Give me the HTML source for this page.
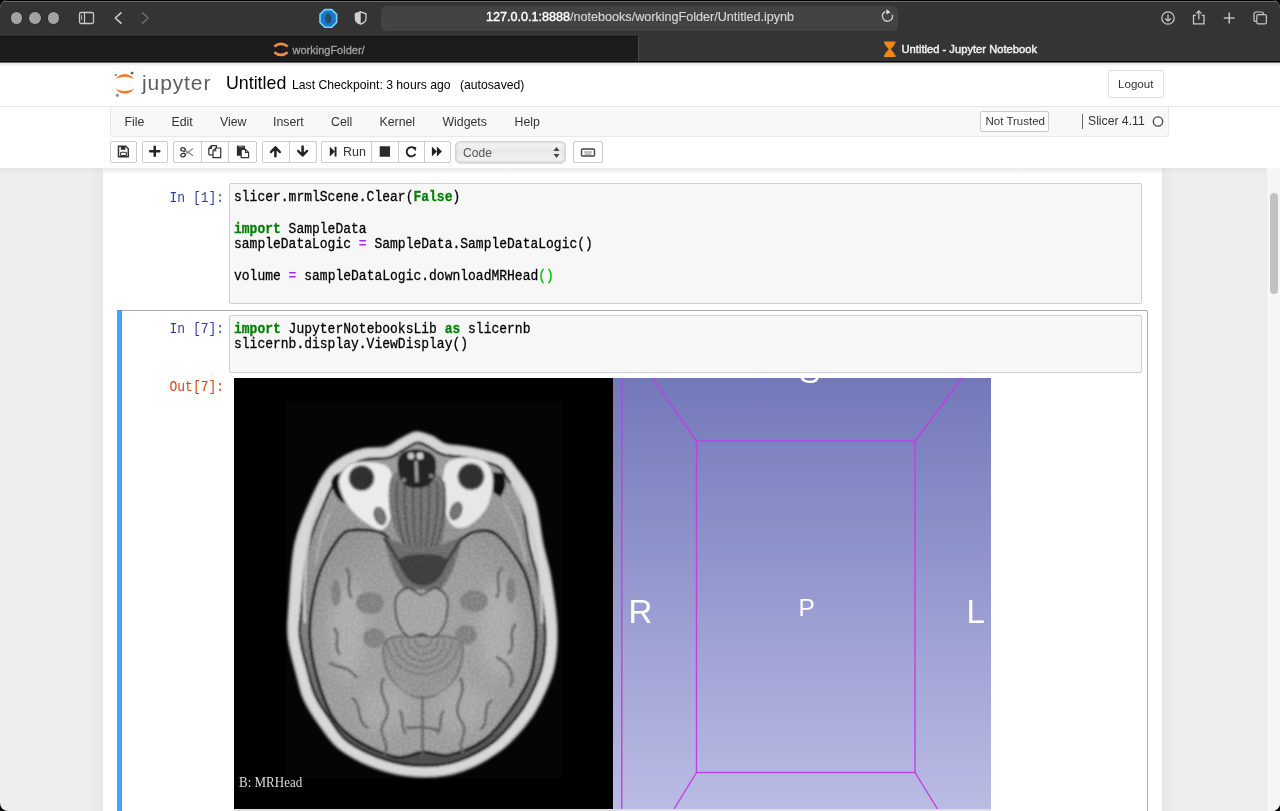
<!DOCTYPE html>
<html><head><meta charset="utf-8">
<style>
*{margin:0;padding:0;box-sizing:border-box}
html,body{width:1280px;height:811px;overflow:hidden;background:#000;font-family:"Liberation Sans",sans-serif}
.a{position:absolute}
#win{position:absolute;left:0;top:0;width:1280px;height:811px;border-radius:8px;overflow:hidden;background:#eee}
#title{left:0;top:0;width:1280px;height:36px;background:#343434;border-top:1px solid #000}
#title:before{content:"";position:absolute;left:0;top:0;right:0;height:1px;background:#6b6b6b;border-radius:8px 8px 0 0}
.tl{width:11.6px;height:11.6px;border-radius:50%;background:#a2a2a2;top:12.4px;box-shadow:0 0 0 0.7px #262626}
#url{left:381px;top:6px;width:517px;height:25px;background:#434343;border-radius:6px}
#urltext{left:486px;top:10.2px;font-size:12.6px;color:#d8d8d8;white-space:pre;-webkit-text-stroke:0.15px #d8d8d8}
#urltext b{color:#fff;font-weight:normal;-webkit-text-stroke:0.4px #fff}
#tabs{left:0;top:36px;width:1280px;height:26px;background:#353535}
#tab1{left:0;top:36px;width:638px;height:25px;background:#1c1c1c;border-top:1px solid #0d0d0d;border-bottom:1px solid #252525}
#tab2{left:638px;top:36px;width:1px;height:26px;background:#4a4a4a}
#tabline{left:0;top:61px;width:1280px;height:2px;background:linear-gradient(#080808 50%,#6a6a6a 50%)}
#page{left:0;top:63px;width:1280px;height:105px;background:#fff}
.btn{position:absolute;background:#fff;border:1px solid #ccc;border-radius:2px;height:22px;top:141px}
.mi{position:absolute;top:115px;font-size:12.3px;color:#333}
.mono{font-family:"Liberation Mono",monospace;font-size:13px;white-space:pre;line-height:14.355px;transform:scaleY(1.1);transform-origin:0 0;-webkit-text-stroke:0.25px currentColor}
.kw{color:#008000;font-weight:bold}
.op{color:#aa22ff}
.inp{position:absolute;left:229px;width:913px;background:#f7f7f7;border:1px solid #cfcfcf;border-radius:2px}
.pr{position:absolute;color:#303f9f;font-family:"Liberation Mono",monospace;font-size:13px;white-space:pre;line-height:14.355px;transform:scaleY(1.1);transform-origin:0 0}
</style></head><body>
<div id="win">
  <!-- title bar -->
  <div id="title" class="a"></div>
  <div class="a tl" style="left:10.5px"></div>
  <div class="a tl" style="left:29px"></div>
  <div class="a tl" style="left:47.5px"></div>
  <div id="url" class="a"></div>
  <div id="urltext" class="a"><b>127.0.0.1:8888</b>/notebooks/workingFolder/Untitled.ipynb</div>
  <svg class="a" style="left:0;top:0" width="1280" height="36">
    <!-- sidebar icon -->
    <rect x="79.5" y="12.5" width="14" height="11" rx="1.5" fill="none" stroke="#c8c8c8" stroke-width="1.3"/>
    <line x1="84.5" y1="12.5" x2="84.5" y2="23.5" stroke="#c8c8c8" stroke-width="1.2"/>
    <line x1="81.5" y1="15" x2="81.5" y2="20" stroke="#c8c8c8" stroke-width="0.8"/>
    <!-- back / forward -->
    <polyline points="121,12.8 115.3,18 121,23.2" fill="none" stroke="#cfcfcf" stroke-width="1.6" stroke-linecap="round" stroke-linejoin="round"/>
    <polyline points="142.5,12.8 148.2,18 142.5,23.2" fill="none" stroke="#6a6a6a" stroke-width="1.6" stroke-linecap="round" stroke-linejoin="round"/>
    <!-- privacy octagon -->
    <polygon points="324.8,9.6 331.8,9.6 336.6,14.4 336.6,22.4 331.8,27.3 324.8,27.3 320,22.4 320,14.4" fill="#1a78c8" stroke="#74d2ff" stroke-width="1.6" stroke-linejoin="round"/>
    <ellipse cx="328.3" cy="18.5" rx="3" ry="5" fill="#2d4a6a"/>
    <!-- half shield -->
    <path d="M360.7,11.8 L366,13.8 L366,18.5 C366,21.5 363.5,23.3 360.7,24 C357.9,23.3 355.4,21.5 355.4,18.5 L355.4,13.8 Z" fill="none" stroke="#d0d0d0" stroke-width="1.3"/>
    <path d="M360.7,11.8 L355.4,13.8 L355.4,18.5 C355.4,21.5 357.9,23.3 360.7,24 Z" fill="#d0d0d0"/>
    <!-- reload -->
    <path d="M890.5,13.6 A5,5 0 1 1 882.3,14.6" fill="none" stroke="#c8c8c8" stroke-width="1.4" stroke-linecap="round" transform="translate(0,-1) rotate(30 886.8 18.4)"/>
    <polygon points="886.5,9.3 890.5,12.2 886.3,14.2" fill="#e6e6e6"/>
    <!-- download -->
    <circle cx="1168" cy="18" r="6.2" fill="none" stroke="#c8c8c8" stroke-width="1.3"/>
    <line x1="1168" y1="14.5" x2="1168" y2="21" stroke="#c8c8c8" stroke-width="1.3"/>
    <polyline points="1165.2,18.5 1168,21.2 1170.8,18.5" fill="none" stroke="#c8c8c8" stroke-width="1.3"/>
    <!-- share -->
    <path d="M1195.8,15.3 L1193.5,15.3 L1193.5,23.8 L1204,23.8 L1204,15.3 L1201.7,15.3" fill="none" stroke="#c8c8c8" stroke-width="1.3"/>
    <line x1="1198.8" y1="11.2" x2="1198.8" y2="19.5" stroke="#c8c8c8" stroke-width="1.3"/>
    <polyline points="1196.3,13.6 1198.8,11 1201.3,13.6" fill="none" stroke="#c8c8c8" stroke-width="1.3"/>
    <!-- plus -->
    <line x1="1223.8" y1="18" x2="1234.6" y2="18" stroke="#c8c8c8" stroke-width="1.4"/>
    <line x1="1229.2" y1="12.6" x2="1229.2" y2="23.4" stroke="#c8c8c8" stroke-width="1.4"/>
    <!-- tabs -->
    <rect x="1254" y="12" width="9.5" height="9.5" rx="2" fill="none" stroke="#c8c8c8" stroke-width="1.2"/>
    <rect x="1256.8" y="14.6" width="9.6" height="9.3" rx="1.5" fill="#363636" stroke="#c8c8c8" stroke-width="1.2"/>
  </svg>

  <!-- tab bar -->
  <div id="tabs" class="a"></div>
  <div id="tab1" class="a"></div>
  <div id="tab2" class="a"></div>
  <div id="tabline" class="a"></div>
  <svg class="a" style="left:270px;top:40px" width="22" height="20">
    <path d="M4.3,6.6 Q11,1.3 17.7,6.6" fill="none" stroke="#ee8a4c" stroke-width="2.6"/>
    <path d="M4.3,12.2 Q11,17.7 17.7,12.2" fill="none" stroke="#ee8a4c" stroke-width="2.6"/>
  </svg>
  <div class="a" style="left:292.5px;top:43.5px;font-size:11px;color:#a3a3a3;white-space:pre;-webkit-text-stroke:0.3px #a3a3a3">workingFolder/</div>
  <svg class="a" style="left:882px;top:41px" width="16" height="17">
    <path d="M2,1.5 H13.5 M2,15 H13.5" stroke="#f0891a" stroke-width="1.8"/>
    <path d="M3,2 L12.5,2 L12.5,4 L8.7,8.2 L12.5,12.5 L12.5,14.5 L3,14.5 L3,12.5 L6.8,8.2 L3,4 Z" fill="#f0891a"/>
  </svg>
  <div class="a" style="left:901.5px;top:43.3px;font-size:11.2px;color:#f0f0f0;white-space:pre;-webkit-text-stroke:0.45px #f0f0f0">Untitled - Jupyter Notebook</div>

  <!-- jupyter header -->
  <div id="page" class="a"></div>
  <div class="a" style="left:0;top:63px;width:1280px;height:3px;background:linear-gradient(#e6e6e6,#f0f0f0 60%,#fcfcfc)"></div>

  <!-- logo -->
  <svg class="a" style="left:108px;top:66px" width="40" height="34">
    <path d="M8,13.4 C10.5,6.5 23.3,6.5 25.8,13.4 C22.5,9.8 11.3,9.8 8,13.4 Z" fill="#f37726"/>
    <path d="M8,22.2 C10.5,29.3 23.3,29.3 25.8,22.2 C22.5,25.9 11.3,25.9 8,22.2 Z" fill="#f37726"/>
    <circle cx="7.8" cy="9" r="1.1" fill="#6f6f70"/>
    <circle cx="24.1" cy="7.1" r="1.4" fill="#5a5b5b"/>
    <circle cx="9.4" cy="29.3" r="1.6" fill="#8f8f90"/>
  </svg>
  <div class="a" style="left:142px;top:70.5px;font-size:21px;letter-spacing:0.9px;color:#5c5c5c;white-space:pre">jupyter</div>
  <div class="a" style="left:226px;top:73px;font-size:17.8px;color:#000;white-space:pre">Untitled</div>
  <div class="a" style="left:292px;top:78px;font-size:12.2px;color:#000;white-space:pre">Last Checkpoint: 3 hours ago</div>
  <div class="a" style="left:460px;top:78px;font-size:12.2px;color:#000;white-space:pre">(autosaved)</div>
  <div class="a" style="left:1108px;top:70px;width:56px;height:28px;border:1.5px solid #dedede;border-radius:2px;background:#fff"></div>
  <div class="a" style="left:1118px;top:77px;font-size:11.6px;color:#333;white-space:pre">Logout</div>
  <div class="a" style="left:0;top:106px;width:1280px;height:1px;background:#e7e7e7"></div>

  <!-- menubar -->
  <div class="a" style="left:110px;top:107px;width:1059px;height:30px;background:#f8f8f8;border:1px solid #e7e7e7;border-top:none;border-radius:0 0 4px 4px"></div>
  <div class="mi" style="left:124.5px">File</div>
  <div class="mi" style="left:171.5px">Edit</div>
  <div class="mi" style="left:220px">View</div>
  <div class="mi" style="left:273px">Insert</div>
  <div class="mi" style="left:331px">Cell</div>
  <div class="mi" style="left:379.5px">Kernel</div>
  <div class="mi" style="left:442.5px">Widgets</div>
  <div class="mi" style="left:514.5px">Help</div>
  <div class="a" style="left:980px;top:111px;width:69px;height:21px;border:1px solid #ccc;border-radius:2px;background:#fff"></div>
  <div class="a" style="left:985.5px;top:114.5px;font-size:11.5px;color:#333;white-space:pre">Not Trusted</div>
  <div class="a" style="left:1082px;top:113.5px;width:1.2px;height:15.5px;background:#666"></div>
  <div class="a" style="left:1088px;top:114px;font-size:12.2px;color:#333;white-space:pre">Slicer 4.11</div>
  <svg class="a" style="left:1151px;top:115px" width="14" height="14"><circle cx="7" cy="6.5" r="4.7" fill="none" stroke="#444" stroke-width="1.3"/></svg>

  <!-- toolbar -->
  <div class="btn" style="left:110px;width:27px"></div>
  <div class="btn" style="left:142px;width:26px"></div>
  <div class="btn" style="left:173px;width:84px"></div>
  <div class="a" style="left:201px;top:141px;width:1px;height:22px;background:#ccc"></div>
  <div class="a" style="left:228px;top:141px;width:1px;height:22px;background:#ccc"></div>
  <div class="btn" style="left:262px;width:55px"></div>
  <div class="a" style="left:289px;top:141px;width:1px;height:22px;background:#ccc"></div>
  <div class="btn" style="left:321px;width:130px"></div>
  <div class="a" style="left:371px;top:141px;width:1px;height:22px;background:#ccc"></div>
  <div class="a" style="left:397.5px;top:141px;width:1px;height:22px;background:#ccc"></div>
  <div class="a" style="left:423.5px;top:141px;width:1px;height:22px;background:#ccc"></div>
  <div class="a" style="left:455px;top:141px;width:111px;height:22px;border:1px solid #d4d4d4;border-radius:5px;background:linear-gradient(#f6f6f6,#e8e8e8 45%,#f4f4f4);box-shadow:inset 0 0 3px #c4c4c4, 0 1px 1px #ddd"></div>
  <div class="a" style="left:463px;top:145.5px;font-size:12.1px;color:#555;white-space:pre">Code</div>
  <svg class="a" style="left:552px;top:146px" width="10" height="14">
    <polygon points="1.5,5 4.5,1 7.5,5" fill="#444"/><polygon points="1.5,8 4.5,12 7.5,8" fill="#444"/>
  </svg>
  <div class="btn" style="left:573px;width:30px"></div>
  <svg class="a" style="left:0;top:136px" width="620" height="32">
    <!-- save -->
    <path d="M118.5,10.3 h7.3 l2.5,2.5 v8 h-9.8 z" fill="none" stroke="#333" stroke-width="1.5"/>
    <rect x="120.8" y="10.6" width="4.6" height="3.2" fill="#333"/>
    <rect x="120.6" y="16.3" width="5.8" height="3.3" rx="0.8" fill="#fff" stroke="#333" stroke-width="1.1"/>
    <!-- plus -->
    <path d="M154.75,10.8 v9 M150.2,15.25 h9.1" stroke="#222" stroke-width="2.5" stroke-linecap="round"/>
    <!-- cut -->
    <ellipse cx="183.1" cy="13.4" rx="2.3" ry="1.7" fill="none" stroke="#333" stroke-width="1.3" transform="rotate(20 183.1 13.4)"/>
    <ellipse cx="183.1" cy="19.1" rx="2.3" ry="1.7" fill="none" stroke="#333" stroke-width="1.3" transform="rotate(-20 183.1 19.1)"/>
    <path d="M185.3,14.4 L193,19.8 M185.3,18.1 L193,12.6" stroke="#777" stroke-width="1.1"/>
    <!-- copy -->
    <path d="M208.8,18.8 V12.4 L211.5,9.7 H216.4 V12 M211.5,9.7 V12.4 H208.8 M208.8,18.8 H213" fill="none" stroke="#333" stroke-width="1.2"/>
    <path d="M213,21.6 V14.7 L215.7,12 H220.7 V21.6 Z" fill="#fff" stroke="#333" stroke-width="1.2"/>
    <path d="M215.7,12 V14.7 H213" fill="none" stroke="#333" stroke-width="1.1"/>
    <!-- paste -->
    <rect x="236.9" y="9.7" width="8" height="10.1" fill="#2a2a2a"/>
    <rect x="238.5" y="10.3" width="4.8" height="1.2" fill="#888"/>
    <path d="M241.2,13.4 H245.5 L248.6,16.5 V21.6 H241.2 Z" fill="#fff" stroke="#333" stroke-width="1.2"/>
    <path d="M245.5,13.4 V16.5 H248.6" fill="none" stroke="#333" stroke-width="1.1"/>
    <!-- up -->
    <path d="M275.4,20.3 V11.8 M271,16 L275.4,11.4 L279.8,16" fill="none" stroke="#222" stroke-width="2.5" stroke-linecap="round" stroke-linejoin="round"/>
    <!-- down -->
    <path d="M302.6,10.6 V19.1 M298.2,15 L302.6,19.5 L307,15" fill="none" stroke="#222" stroke-width="2.5" stroke-linecap="round" stroke-linejoin="round"/>
    <!-- run -->
    <polygon points="329.8,10.8 334.8,15.6 329.8,20.5" fill="#222"/>
    <rect x="334.6" y="10.8" width="1.9" height="9.7" fill="#222"/>
    <!-- stop -->
    <rect x="379.7" y="10.25" width="10.3" height="10.5" fill="#2b2b2b"/>
    <!-- restart -->
    <path d="M414.6,12.6 A4.6,4.6 0 1 0 415.4,17.8" fill="none" stroke="#222" stroke-width="1.9"/>
    <polygon points="412.2,10.6 416.3,11.3 415.6,15.3" fill="#222"/>
    <!-- fast forward -->
    <polygon points="431.9,10.6 436.9,15.6 431.9,20.6" fill="#222"/>
    <polygon points="436.9,10.6 441.9,15.6 436.9,20.6" fill="#222"/>
    <!-- keyboard -->
    <rect x="581.5" y="13" width="13" height="7" rx="1" fill="none" stroke="#444" stroke-width="1.4"/>
    <path d="M584,16 h8 M584.5,18 h7" stroke="#666" stroke-width="0.8"/>
  </svg>
  <div class="a" style="left:343px;top:145px;font-size:12.5px;color:#333;white-space:pre">Run</div>

  <!-- notebook -->
  <div class="a" style="left:103px;top:168px;width:1059px;height:643px;background:#fff"></div>
  <div class="a" style="left:103px;top:168px;width:1059px;height:8px;background:linear-gradient(rgba(0,0,0,0.05),rgba(0,0,0,0))"></div>
  <div class="a" style="left:90px;top:168px;width:13px;height:643px;background:linear-gradient(90deg,rgba(0,0,0,0),rgba(0,0,0,0.03))"></div>
  <div class="a" style="left:1162px;top:168px;width:13px;height:643px;background:linear-gradient(90deg,rgba(0,0,0,0.03),rgba(0,0,0,0))"></div>
  <div class="a" style="left:0;top:168px;width:1280px;height:6px;background:linear-gradient(rgba(0,0,0,0.04),rgba(0,0,0,0))"></div>
  <!-- scrollbar -->
  <div class="a" style="left:1266px;top:168px;width:14px;height:643px;background:#f6f6f6;border-left:1px solid #e9e9e9"></div>
  <div class="a" style="left:1269.5px;top:193px;width:8px;height:101px;border-radius:4px;background:#c2c2c2"></div>

  <!-- cell 1 -->
  <div class="pr" style="left:169.5px;top:190.5px">In [1]:</div>
  <div class="inp" style="top:183px;height:121px"></div>
  <div class="a mono" style="left:234px;top:189.5px;color:#000">slicer.mrmlScene.Clear(<span class="kw">False</span>)

<span class="kw">import</span> SampleData
sampleDataLogic <span class="op">=</span> SampleData.SampleDataLogic()

volume <span class="op">=</span> sampleDataLogic.downloadMRHead<span style="color:#00bb00">()</span></div>

  <!-- cell 2 -->
  <div class="a" style="left:117px;top:310px;width:1031px;height:520px;border:1px solid #ababab;border-radius:2px"></div>
  <div class="a" style="left:117px;top:310px;width:5px;height:520px;background:#42a5f5"></div>
  <div class="pr" style="left:169.5px;top:322px">In [7]:</div>
  <div class="inp" style="top:315px;height:58px"></div>
  <div class="a mono" style="left:234px;top:322px;color:#000"><span class="kw">import</span> JupyterNotebooksLib <span class="kw">as</span> slicernb
slicernb.display.ViewDisplay()</div>
  <div class="pr" style="left:169.5px;top:379.5px;color:#d84315">Out[7]:</div>

  <!-- output image -->
  <!--BRAIN-->
<svg class="a" style="left:234px;top:378px" width="379" height="431" viewBox="0 0 379 431">
<defs><filter id="bl" x="-5%" y="-5%" width="110%" height="110%"><feGaussianBlur stdDeviation="0.8"/></filter><filter id="bl2" x="-50%" y="-50%" width="200%" height="200%"><feGaussianBlur stdDeviation="7"/></filter><radialGradient id="bg1" cx="0.5" cy="0.55" r="0.6"><stop offset="0" stop-color="#a0a0a0"/><stop offset="0.75" stop-color="#999"/><stop offset="1" stop-color="#8e8e8e"/></radialGradient><linearGradient id="mg" x1="0" y1="0" x2="0" y2="1"><stop offset="0" stop-color="#9a9a9a"/><stop offset="0.45" stop-color="#8a8a8a"/><stop offset="0.7" stop-color="#707070"/><stop offset="1" stop-color="#4a4a4a"/></linearGradient></defs>
<rect width="379" height="431" fill="#000"/>
<rect x="52" y="23" width="276" height="377" fill="#050505"/>
<g filter="url(#bl)">
<path d="M182.0,53.7 C187.3,53.2 193.0,56.0 198.0,58.0 C203.0,60.0 205.8,64.2 212.0,66.0 C218.2,67.8 225.7,67.2 235.0,69.0 C244.3,70.8 260.0,73.2 268.0,77.0 C276.0,80.8 277.6,84.3 283.0,91.6 C288.4,98.9 296.4,108.7 300.7,121.0 C305.0,133.3 306.3,152.4 309.0,165.6 C311.7,178.8 314.7,186.1 317.0,200.0 C319.3,213.9 322.5,234.0 323.0,249.0 C323.5,264.0 322.8,277.3 320.0,290.0 C317.2,302.7 310.8,315.3 306.0,325.0 C301.2,334.7 297.7,340.0 291.0,348.0 C284.3,356.0 276.3,365.5 266.0,373.0 C255.7,380.5 241.3,388.7 229.0,393.0 C216.7,397.3 205.2,399.0 192.0,399.0 C178.8,399.0 164.0,397.3 150.0,393.0 C136.0,388.7 118.7,380.5 108.0,373.0 C97.3,365.5 92.3,356.5 86.0,348.0 C79.7,339.5 73.8,330.2 70.0,322.0 C66.2,313.8 65.7,309.3 63.0,299.0 C60.3,288.7 55.3,272.3 54.0,260.0 C52.7,247.7 53.9,240.8 55.0,225.0 C56.1,209.2 57.1,182.8 60.8,165.5 C64.5,148.2 71.6,133.3 77.0,121.0 C82.4,108.7 87.2,98.9 93.0,91.6 C98.8,84.3 105.8,80.5 112.0,77.0 C118.2,73.5 123.3,71.8 130.0,70.5 C136.7,69.2 146.0,70.6 152.0,69.0 C158.0,67.4 161.0,63.5 166.0,61.0 C171.0,58.5 176.7,54.2 182.0,53.7 Z" fill="#d6d6d6" stroke="#8d8d8d" stroke-width="2"/>
<path d="M183.0,64.7 C186.8,64.2 189.5,66.2 193.8,68.2 C198.1,70.2 202.4,74.6 208.9,76.5 C215.4,78.5 223.9,77.9 232.9,79.8 C241.9,81.7 256.3,84.6 262.9,87.9 C269.5,91.1 268.5,93.1 272.6,99.4 C276.7,105.7 283.7,114.1 287.5,125.6 C291.3,137.2 292.5,155.7 295.3,168.4 C298.1,181.2 301.6,188.7 304.2,202.2 C306.8,215.6 310.3,235.2 311.0,249.4 C311.7,263.6 310.9,275.7 308.3,287.4 C305.7,299.1 299.7,310.8 295.3,319.6 C290.8,328.5 287.7,332.9 281.8,340.3 C275.8,347.7 268.9,357.0 259.5,364.1 C250.1,371.1 236.6,378.6 225.4,382.6 C214.1,386.6 204.0,388.0 192.0,388.0 C180.0,388.0 166.2,386.5 153.3,382.5 C140.3,378.5 123.9,370.9 114.3,364.0 C104.7,357.1 101.2,348.7 95.6,340.8 C90.0,333.0 84.4,324.4 80.9,316.9 C77.4,309.4 77.1,305.7 74.6,296.0 C72.1,286.3 67.0,270.4 65.9,258.7 C64.8,247.0 66.5,241.0 68.0,225.9 C69.4,210.9 70.9,185.0 74.5,168.4 C78.1,151.8 85.1,138.0 89.8,126.6 C94.6,115.1 98.5,106.2 103.2,99.7 C107.9,93.2 113.1,90.5 117.9,87.4 C122.8,84.4 126.0,82.6 132.2,81.3 C138.3,80.0 148.3,81.4 154.8,79.6 C161.3,77.9 166.3,73.3 171.0,70.8 C175.7,68.3 179.2,65.1 183.0,64.7 Z" fill="url(#mg)" stroke="#161616" stroke-width="2.6"/>
<path d="M88,120 C78,140 72,170 71,200 C70,215 70,230 71,245" stroke="#c8c8c8" stroke-width="2.5" fill="none"/>
<path d="M96,135 C88,150 84,165 82,185" stroke="#b0b0b0" stroke-width="1.8" fill="none"/>
<path d="M277,105 C290,125 298,150 303,180 C306,200 308,220 308,245" stroke="#c8c8c8" stroke-width="2.5" fill="none"/>
<path d="M270,125 C280,140 288,160 292,185" stroke="#b0b0b0" stroke-width="1.8" fill="none"/>
<path d="M120.0,152.0 C127.0,151.3 141.0,152.3 148.0,155.0 C155.0,157.7 155.2,164.8 162.0,168.0 C168.8,171.2 180.0,174.0 189.0,174.0 C198.0,174.0 207.5,171.3 216.0,168.0 C224.5,164.7 232.2,155.8 240.0,154.0 C247.8,152.2 254.8,150.8 263.0,157.0 C271.2,163.2 283.0,179.5 289.0,191.0 C295.0,202.5 296.8,214.5 299.0,226.0 C301.2,237.5 302.5,247.8 302.0,260.0 C301.5,272.2 300.3,286.8 296.0,299.0 C291.7,311.2 283.7,322.5 276.0,333.0 C268.3,343.5 260.2,354.7 250.0,362.0 C239.8,369.3 225.2,375.0 215.0,377.0 C204.8,379.0 197.8,373.7 189.0,374.0 C180.2,374.3 173.2,381.0 162.0,379.0 C150.8,377.0 132.7,368.8 122.0,362.0 C111.3,355.2 104.5,348.5 98.0,338.0 C91.5,327.5 86.7,312.0 83.0,299.0 C79.3,286.0 76.8,272.2 76.0,260.0 C75.2,247.8 76.2,237.5 78.0,226.0 C79.8,214.5 82.3,202.2 87.0,191.0 C91.7,179.8 100.5,165.5 106.0,159.0 C111.5,152.5 113.0,152.7 120.0,152.0 Z" fill="url(#bg1)" stroke="#121212" stroke-width="2.8"/>
<path d="M97,104 C99,97 104,94 109,95 L112,126 C105,124 99,116 97,104 Z" fill="#111"/>
<path d="M268,95 C273,100 273,111 266,119 L256,112 L258,94 Z" fill="#111"/>
<path d="M106.0,98.6 C107.7,94.5 110.7,88.7 116.0,86.3 C121.3,83.9 131.4,83.4 138.0,84.0 C144.6,84.6 151.7,85.5 155.4,90.0 C159.1,94.5 159.9,103.0 160.3,111.0 C160.7,119.0 159.9,131.2 157.8,138.0 C155.8,144.8 152.1,150.7 148.0,152.0 C143.9,153.3 138.3,149.5 133.0,146.0 C127.7,142.5 120.5,136.8 116.0,131.0 C111.5,125.2 107.7,116.4 106.0,111.0 C104.3,105.6 104.3,102.7 106.0,98.6 Z" fill="#ebebeb" stroke="#9a9a9a" stroke-width="1.2"/>
<path d="M208.4,98.6 C209.4,91.9 209.8,86.2 214.5,83.0 C219.2,79.8 230.1,79.0 236.7,79.5 C243.3,80.0 250.3,82.0 254.0,86.0 C257.7,90.0 259.0,96.6 259.0,103.6 C259.0,110.6 257.3,121.2 254.0,128.2 C250.7,135.2 243.9,141.8 239.0,145.5 C234.1,149.2 228.5,150.8 224.4,150.4 C220.3,150.0 217.2,147.5 214.5,143.0 C211.8,138.5 209.4,130.7 208.4,123.3 C207.4,115.9 207.4,105.3 208.4,98.6 Z" fill="#e6e6e6" stroke="#9a9a9a" stroke-width="1.2"/>
<circle cx="127.5" cy="100" r="12.3" fill="#2e2e2e" stroke="#666" stroke-width="1.6"/>
<circle cx="237" cy="98.6" r="12.8" fill="#2e2e2e" stroke="#666" stroke-width="1.6"/>
<ellipse cx="146" cy="138" rx="5.5" ry="9" fill="#707070" stroke="#444" stroke-width="1" transform="rotate(-20 146 138)"/>
<ellipse cx="222" cy="133" rx="5.5" ry="9" fill="#707070" stroke="#444" stroke-width="1" transform="rotate(20 222 133)"/>
<path d="M158.0,98.0 C162.3,91.2 173.7,93.7 182.0,94.0 C190.3,94.3 203.0,93.2 208.0,100.0 C213.0,106.8 212.3,123.7 212.0,135.0 C211.7,146.3 209.8,161.2 206.0,168.0 C202.2,174.8 195.0,176.0 189.0,176.0 C183.0,176.0 175.5,174.8 170.0,168.0 C164.5,161.2 158.0,146.7 156.0,135.0 C154.0,123.3 153.7,104.8 158.0,98.0 Z" fill="#727272"/>
<path d="M163,104 Q159.55,140 173.35,174" stroke="#4c4c4c" stroke-width="1.8" fill="none"/>
<path d="M171,104 Q168.75,140 177.75,174" stroke="#4c4c4c" stroke-width="1.8" fill="none"/>
<path d="M179,104 Q177.95,140 182.15,174" stroke="#4c4c4c" stroke-width="1.8" fill="none"/>
<path d="M187,104 Q187.15,140 186.55,174" stroke="#4c4c4c" stroke-width="1.8" fill="none"/>
<path d="M195,104 Q196.35,140 190.95,174" stroke="#4c4c4c" stroke-width="1.8" fill="none"/>
<path d="M203,104 Q205.55,140 195.35,174" stroke="#4c4c4c" stroke-width="1.8" fill="none"/>
<path d="M210,104 Q213.6,140 199.2,174" stroke="#4c4c4c" stroke-width="1.8" fill="none"/>
<path d="M166.0,77.0 C169.0,73.5 176.5,71.0 182.0,71.0 C187.5,71.0 195.7,73.5 199.0,77.0 C202.3,80.5 202.5,87.2 202.0,92.0 C201.5,96.8 199.2,103.0 196.0,106.0 C192.8,109.0 187.3,110.0 183.0,110.0 C178.7,110.0 173.2,109.0 170.0,106.0 C166.8,103.0 164.7,96.8 164.0,92.0 C163.3,87.2 163.0,80.5 166.0,77.0 Z" fill="#222"/>
<circle cx="177" cy="78" r="3.2" fill="#c4c4c4"/><circle cx="186" cy="78" r="3.4" fill="#d0d0d0"/><path d="M182,83 L183,104" stroke="#9a9a9a" stroke-width="3"/>
<circle cx="170" cy="102" r="2" fill="#888"/><circle cx="197" cy="98" r="2" fill="#888"/>
<path d="M150,158 C165,165 172,168 189,170 C206,168 213,165 228,158 C224,180 218,200 206,212 L172,212 C160,200 154,180 150,158 Z" fill="#6a6a6a"/>
<path d="M166.0,181.0 C168.7,177.0 181.3,176.0 189.0,176.0 C196.7,176.0 209.3,177.0 212.0,181.0 C214.7,185.0 208.8,195.5 205.0,200.0 C201.2,204.5 194.3,208.0 189.0,208.0 C183.7,208.0 176.8,204.5 173.0,200.0 C169.2,195.5 163.3,185.0 166.0,181.0 Z" fill="#3e3e3e"/>
<path d="M150,160 C160,175 165,182 172,196 M228,160 C218,175 213,182 206,196" stroke="#3a3a3a" stroke-width="3" fill="none"/>
<path d="M153.0,262.0 C159.2,256.7 177.0,258.0 189.0,258.0 C201.0,258.0 218.8,256.7 225.0,262.0 C231.2,267.3 228.5,281.7 226.0,290.0 C223.5,298.3 216.2,307.0 210.0,312.0 C203.8,317.0 196.0,320.0 189.0,320.0 C182.0,320.0 174.2,317.0 168.0,312.0 C161.8,307.0 154.5,298.3 152.0,290.0 C149.5,281.7 146.8,267.3 153.0,262.0 Z" fill="#909090" stroke="#555" stroke-width="1.5"/>
<path d="M181,262 A8,7.6 0 0 0 197,262" stroke="#6c6c6c" stroke-width="1.5" fill="none"/>
<path d="M174,262 A15,14.25 0 0 0 204,262" stroke="#6c6c6c" stroke-width="1.5" fill="none"/>
<path d="M167,262 A22,20.9 0 0 0 211,262" stroke="#6c6c6c" stroke-width="1.5" fill="none"/>
<path d="M160,262 A29,27.549999999999997 0 0 0 218,262" stroke="#6c6c6c" stroke-width="1.5" fill="none"/>
<path d="M153,262 A36,34.199999999999996 0 0 0 225,262" stroke="#6c6c6c" stroke-width="1.5" fill="none"/>
<path d="M162.0,220.0 C163.7,214.2 169.8,210.5 174.0,210.0 C178.2,209.5 183.0,217.0 187.5,217.0 C192.0,217.0 196.8,209.5 201.0,210.0 C205.2,210.5 211.3,214.2 213.0,220.0 C214.7,225.8 213.2,238.5 211.0,245.0 C208.8,251.5 203.9,257.2 200.0,259.0 C196.1,260.8 191.7,256.0 187.5,256.0 C183.3,256.0 178.9,260.8 175.0,259.0 C171.1,257.2 166.2,251.5 164.0,245.0 C161.8,238.5 160.3,225.8 162.0,220.0 Z" fill="#a2a2a2" stroke="#3c3c3c" stroke-width="1.8"/>
<g filter="url(#bl2)"><ellipse cx="114" cy="252" rx="18" ry="50" fill="#aaa"/><ellipse cx="264" cy="250" rx="18" ry="50" fill="#aaa"/><ellipse cx="150" cy="330" rx="26" ry="24" fill="#a6a6a6"/><ellipse cx="228" cy="330" rx="26" ry="24" fill="#a6a6a6"/></g>
<ellipse cx="136" cy="225" rx="14" ry="11" fill="#7e7e7e"/>
<ellipse cx="240" cy="223" rx="14" ry="11" fill="#7e7e7e"/>
<ellipse cx="140" cy="260" rx="11" ry="10" fill="#7e7e7e"/>
<ellipse cx="232" cy="257" rx="11" ry="10" fill="#7e7e7e"/>
<ellipse cx="102" cy="215" rx="5" ry="13" fill="#7e7e7e"/>
<ellipse cx="277" cy="212" rx="5" ry="13" fill="#7e7e7e"/>
<path d="M188.5,318 L188.5,376" stroke="#606060" stroke-width="2.6" fill="none"/>
<path d="M172,350 L188.5,349 L205,352" stroke="#606060" stroke-width="2.6" fill="none"/>
<path d="M150,300 C140,318 162,326 150,344 C142,356 158,366 150,377" stroke="#606060" stroke-width="2.6" fill="none"/>
<path d="M226,300 C236,318 214,326 228,344 C236,356 220,366 230,375" stroke="#606060" stroke-width="2.6" fill="none"/>
<path d="M95,285 C105,290 115,288 123,300" stroke="#606060" stroke-width="2.6" fill="none"/>
<path d="M262,279 C275,285 282,298 276,309" stroke="#606060" stroke-width="2.6" fill="none"/>
<path d="M118,320 C130,328 120,342 134,350" stroke="#606060" stroke-width="2.6" fill="none"/>
<path d="M258,322 C246,332 258,342 246,352" stroke="#606060" stroke-width="2.6" fill="none"/>
<path d="M100,250 C108,258 98,268 106,276" stroke="#606060" stroke-width="2.6" fill="none"/>
<path d="M282,246 C272,256 284,266 274,276" stroke="#606060" stroke-width="2.6" fill="none"/>
<path d="M112,190 C120,200 110,210 118,220" stroke="#606060" stroke-width="2.6" fill="none"/>
<path d="M268,190 C258,200 270,210 262,220" stroke="#606060" stroke-width="2.6" fill="none"/>
<path d="M165,332 C172,340 165,348 172,356" stroke="#606060" stroke-width="2.6" fill="none"/>
<path d="M210,332 C203,340 210,348 203,356" stroke="#606060" stroke-width="2.6" fill="none"/>
</g>
<clipPath id="hc"><path d="M182.0,53.7 C187.3,53.2 193.0,56.0 198.0,58.0 C203.0,60.0 205.8,64.2 212.0,66.0 C218.2,67.8 225.7,67.2 235.0,69.0 C244.3,70.8 260.0,73.2 268.0,77.0 C276.0,80.8 277.6,84.3 283.0,91.6 C288.4,98.9 296.4,108.7 300.7,121.0 C305.0,133.3 306.3,152.4 309.0,165.6 C311.7,178.8 314.7,186.1 317.0,200.0 C319.3,213.9 322.5,234.0 323.0,249.0 C323.5,264.0 322.8,277.3 320.0,290.0 C317.2,302.7 310.8,315.3 306.0,325.0 C301.2,334.7 297.7,340.0 291.0,348.0 C284.3,356.0 276.3,365.5 266.0,373.0 C255.7,380.5 241.3,388.7 229.0,393.0 C216.7,397.3 205.2,399.0 192.0,399.0 C178.8,399.0 164.0,397.3 150.0,393.0 C136.0,388.7 118.7,380.5 108.0,373.0 C97.3,365.5 92.3,356.5 86.0,348.0 C79.7,339.5 73.8,330.2 70.0,322.0 C66.2,313.8 65.7,309.3 63.0,299.0 C60.3,288.7 55.3,272.3 54.0,260.0 C52.7,247.7 53.9,240.8 55.0,225.0 C56.1,209.2 57.1,182.8 60.8,165.5 C64.5,148.2 71.6,133.3 77.0,121.0 C82.4,108.7 87.2,98.9 93.0,91.6 C98.8,84.3 105.8,80.5 112.0,77.0 C118.2,73.5 123.3,71.8 130.0,70.5 C136.7,69.2 146.0,70.6 152.0,69.0 C158.0,67.4 161.0,63.5 166.0,61.0 C171.0,58.5 176.7,54.2 182.0,53.7 Z"/></clipPath>
<filter id="nz" x="0" y="0" width="100%" height="100%"><feTurbulence type="fractalNoise" baseFrequency="0.35" numOctaves="2" seed="7"/><feColorMatrix type="matrix" values="0 0 0 0 0.5  0 0 0 0 0.5  0 0 0 0 0.5  0 0 0 1.6 -0.55"/></filter>
<rect x="40" y="40" width="300" height="370" filter="url(#nz)" clip-path="url(#hc)" opacity="0.35" style="mix-blend-mode:overlay"/>
</svg>
  <!--/BRAIN-->
  <div class="a" style="left:234px;top:809px;width:757px;height:2px;background:#e0e0e0"></div>
  <svg class="a" style="left:613px;top:378px" width="378" height="431">
    <defs>
      <linearGradient id="pg" x1="0" y1="0" x2="0" y2="1">
        <stop offset="0" stop-color="#7378ba"/>
        <stop offset="1" stop-color="#babce4"/>
      </linearGradient>
    </defs>
    <rect width="378" height="431" fill="url(#pg)"/>
    <g stroke="#c040e0" stroke-width="1.4" fill="none">
      <line x1="8.8" y1="0" x2="8.8" y2="431"/>
      <rect x="83.5" y="63" width="218.5" height="331.5"/>
      <line x1="39.5" y1="0" x2="83.5" y2="63"/>
      <line x1="349" y1="0" x2="302" y2="63"/>
      <line x1="83.5" y1="394.5" x2="61" y2="431"/>
      <line x1="302" y1="394.5" x2="324.5" y2="431"/>
    </g>
    <text x="15.5" y="244.6" font-family="Liberation Sans" font-size="33" fill="#fff">R</text>
    <text x="185.5" y="238.2" font-family="Liberation Sans" font-size="24.5" fill="#fff">P</text>
    <text x="353.5" y="244.6" font-family="Liberation Sans" font-size="33" fill="#fff">L</text>
    <text x="186" y="4.5" font-family="Liberation Sans" font-size="32" fill="#fff">S</text>
  </svg>
  <div class="a" style="left:239px;top:774px;font-family:'Liberation Serif',serif;font-size:13px;line-height:15px;color:#dcdcdc;white-space:pre;transform:scaleY(1.09);transform-origin:0 0">B: MRHead</div>
</div>
</body></html>
